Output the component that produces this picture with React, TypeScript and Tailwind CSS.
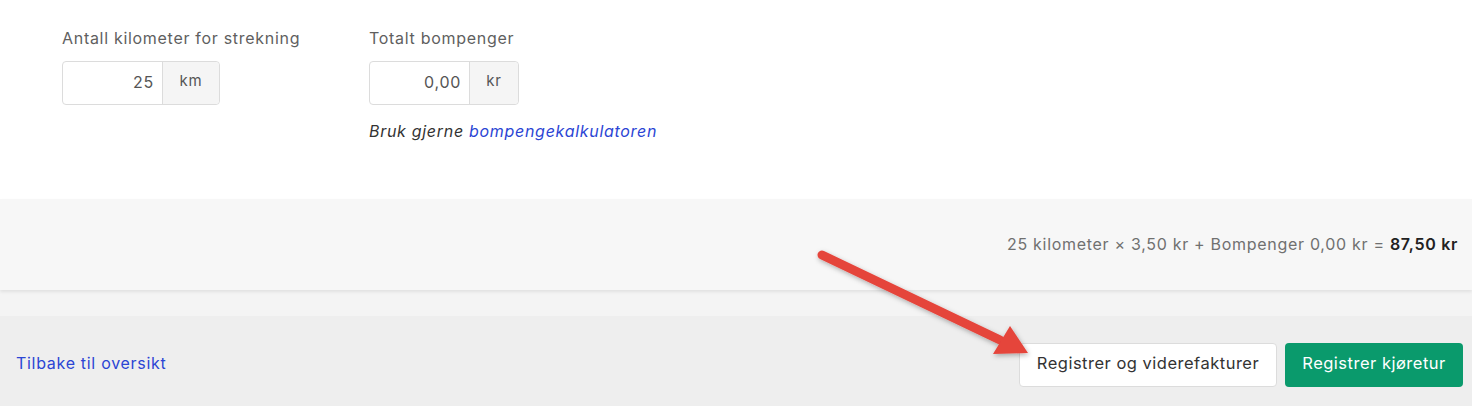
import React from "react";

export default function App() {
  return (
    <div
      className="relative w-[1472px] h-[406px] overflow-hidden bg-white text-[#555] tracking-[0.7px]"
      style={{ fontFamily: "Inter, 'Liberation Sans', sans-serif" }}
    >
      <div className="flex pl-[62px] pt-[26px] pb-[56px]">
        <div className="flex w-[307px] flex-col">
          <label className="text-[16px] leading-[24px] text-[#5f5f5f]">Antall kilometer for strekning</label>
          <div className="mt-[11px] flex h-[44px] w-[158px] rounded-[4px] border border-[#dcdcdc]">
            <div className="flex w-[99px] items-center justify-end pr-[8px] pb-[2px] text-[16px] text-[#555]">25</div>
            <div className="flex flex-1 items-center justify-center rounded-r-[4px] border-l border-[#dcdcdc] bg-[#f5f5f5] pb-[3px] text-[15px] text-[#555]">km</div>
          </div>
        </div>
        <div className="flex flex-col">
          <label className="text-[16px] leading-[24px] text-[#5f5f5f]">Totalt bompenger</label>
          <div className="mt-[11px] flex h-[44px] w-[150px] rounded-[4px] border border-[#dcdcdc]">
            <div className="flex w-[99px] items-center justify-end pr-[8px] pb-[2px] text-[16px] text-[#555]">0,00</div>
            <div className="flex flex-1 items-center justify-center rounded-r-[4px] border-l border-[#dcdcdc] bg-[#f5f5f5] pb-[3px] text-[15px] text-[#555]">kr</div>
          </div>
          <p className="mt-[14px] text-[16px] leading-[24px] italic text-[#333]">
            Bruk gjerne <a className="text-[#2b45d4]">bompengekalkulatoren</a>
          </p>
        </div>
      </div>

      <div className="relative z-10 flex h-[91px] items-center justify-end bg-[#f7f7f7] pr-[14px] pb-[2px] text-[16px] text-[#707070] shadow-[0_2px_3px_rgba(0,0,0,0.08)]">
        <span>
          25 kilometer × 3,50 kr + Bompenger 0,00 kr = <span className="font-semibold text-[#222]">87,50 kr</span>
        </span>
      </div>
      <div className="h-[26px] bg-[#f4f4f4]" />
      <div className="flex h-[90px] items-start justify-between bg-[#eeeeee] pt-[27px] pl-[16px] pr-[9px]">
        <a className="mt-[8px] text-[16px] leading-[24px] text-[#2b45d4]">Tilbake til oversikt</a>
        <div className="flex gap-[8px]">
          <button className="h-[44px] w-[258px] rounded-[4px] border border-[#dcdcdc] bg-white pb-[3px] text-[16.5px] tracking-[0.5px] text-[#333]">
            Registrer og viderefakturer
          </button>
          <button className="h-[44px] w-[178px] rounded-[4px] bg-[#0a9a6c] pb-[3px] text-[16.5px] tracking-[0.5px] text-white">
            Registrer kjøretur
          </button>
        </div>
      </div>

      <svg className="pointer-events-none absolute left-0 top-0 z-20" width="1472" height="406">
        <defs>
          <filter id="sh" x="-20%" y="-20%" width="140%" height="140%">
            <feDropShadow dx="1" dy="2" stdDeviation="2.5" floodColor="#000" floodOpacity="0.3" />
          </filter>
        </defs>
        <g filter="url(#sh)">
          <line x1="822" y1="255" x2="1000" y2="340" stroke="#e5443b" strokeWidth="9" strokeLinecap="round" />
          <polygon points="1028,353 993,354 1010,326" fill="#e5443b" />
        </g>
      </svg>
    </div>
  );
}
